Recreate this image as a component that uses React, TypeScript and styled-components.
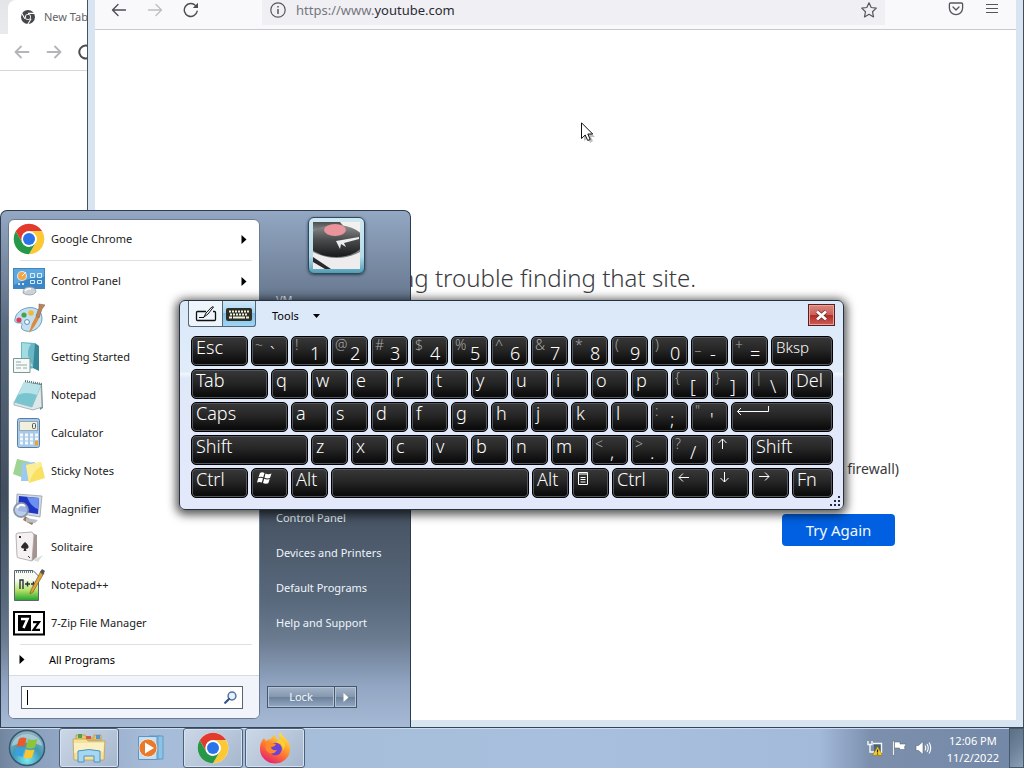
import React from "react";
import styled, { createGlobalStyle } from "styled-components";

const uiFont = `"Noto Sans", "Open Sans", sans-serif`;

const GlobalStyle = createGlobalStyle`
  * { box-sizing: border-box; }
  body { margin: 0; font-family: ${uiFont}; font-size: 11px; line-height: 16px; color: #222; }
  button, input { font: inherit; color: inherit; margin: 0; padding: 0; border: 0; background: none; }
  svg { display: block; flex: none; }
`;

const Desktop = styled.div`
  display: flex;
  flex-direction: column;
  height: 100vh;
  min-height: 728px;
  overflow: hidden;
  background: #fff;
`;

const Workspace = styled.main`
  position: relative;
  flex: 1;
`;

/* ---------- Chrome window ---------- */

const ChromeWindow = styled.section`
  position: absolute;
  inset: 0 auto 0 0;
  width: 60%;
  background: #fff;
`;

const ChromeTabs = styled.div`
  display: flex;
  height: 34px;
  padding-left: 8px;
  background: linear-gradient(#e4e5e9, #e9eaee);
`;

const ChromeTab = styled.div`
  display: flex;
  align-items: center;
  gap: 8px;
  width: 200px;
  padding-left: 12px;
  border-radius: 8px 8px 0 0;
  background: #fff;
  color: #5f6368;
`;

const ChromeToolbar = styled.div`
  display: flex;
  align-items: center;
  gap: 16px;
  height: 37px;
  padding-left: 14px;
  border-bottom: 1px solid #d5d6d8;
`;

const IconButton = styled.button`
  display: grid;
  place-items: center;
`;

/* ---------- Firefox window ---------- */

const FirefoxWindow = styled.section`
  position: absolute;
  inset: 0 0 0 87px;
  display: flex;
  flex-direction: column;
  padding: 0 7px 7px;
  border-left: 1px solid #45525f;
  border-right: 1px solid #3c4e60;
  background: #d8e4ef;
`;

const FirefoxToolbar = styled.div`
  display: flex;
  height: 30px;
  padding: 0 16px;
  border-bottom: 1px solid #c8c9cf;
  background: #f9f9fb;
`;

const NavGroup = styled.div`
  display: flex;
  gap: 20px;
  height: 20px;
  align-items: center;
`;

const AddressBar = styled.form`
  display: flex;
  flex: 1;
  align-items: center;
  gap: 10px;
  height: 25px;
  margin: 0 63px;
  padding: 0 8px 6px 8px;
  background: #f0f0f4;
`;

const Address = styled.p`
  flex: 1;
  margin: 0;
  font-size: 13px;
  line-height: 18px;
  color: #76767c;

  b { font-weight: 400; color: #2b2a33; }
`;

const ErrorPage = styled.div`
  flex: 1;
  display: flex;
  flex-direction: column;
  align-items: flex-end;
  padding: 230px 121px 0 0;
  background: #fff;
  color: #3a3a40;
`;

const ErrorBody = styled.div`
  display: flex;
  flex-direction: column;
  width: 640px;
`;

const ErrorTitle = styled.h1`
  margin: 0 199px 0 0;
  text-align: right;
  white-space: nowrap;
  font-size: 24px;
  line-height: 36px;
  font-weight: 300;
`;

const ErrorHint = styled.p`
  margin: 163px -4px 0 0;
  text-align: right;
  font-size: 14px;
  line-height: 20px;
`;

const TryAgain = styled.button`
  align-self: flex-end;
  width: 113px;
  height: 32px;
  margin-top: 35px;
  border-radius: 4px;
  background: #0060e1;
  color: #f2f8ff;
  font-size: 15px;
`;

/* ---------- Start menu ---------- */

const StartMenuPanel = styled.nav`
  position: absolute;
  left: 0;
  bottom: 0;
  display: flex;
  width: 411px;
  height: 517px;
  padding: 8px 0 8px 7px;
  border: 1px solid #2d3b4c;
  border-bottom: 0;
  border-radius: 7px 7px 0 0;
  background: linear-gradient(#93a7c3, #74869e 12%, #5b6b80 22%, #424e5d 55%, #58687b 75%, #6b7b90 83%, #92a6c3 92%, #a6bad6);
`;

const Programs = styled.div`
  display: flex;
  flex-direction: column;
  width: 252px;
  overflow: hidden;
  border: 1px solid #6c7c90;
  border-radius: 6px;
  background: #fff;
`;

const Rule = styled.hr`
  width: 232px;
  margin: 2px 0 1px 11px;
  border: 0;
  border-top: 1px solid #dde1e6;
`;

const ProgramButton = styled.button`
  display: flex;
  align-items: center;
  gap: 6px;
  width: 100%;
  height: 38px;
  padding: 0 12px 0 4px;
  text-align: left;

  span { flex: 1; }
`;

const AllPrograms = styled(ProgramButton)`
  height: 29px;
  padding: 0 0 2px 10px;
  gap: 24px;
  color: #000;
`;

const SearchArea = styled.div`
  flex: 1;
  padding: 10px 16px 0 12px;
  border-top: 1px solid #d3dbe5;
  background: #f1f5fb;
`;

const SearchBox = styled.label`
  display: flex;
  align-items: center;
  height: 23px;
  padding: 0 5px;
  border: 1px solid #566474;
  background: #fff;

  input { flex: 1; min-width: 0; outline: 0; }
`;

const Caret = styled.i`
  width: 1px;
  height: 15px;
  background: #000;
`;

const Places = styled.div`
  display: flex;
  flex: 1;
  flex-direction: column;
  padding-left: 7px;
`;

const Avatar = styled.div`
  width: 57px;
  height: 57px;
  margin: -2px 0 0 41px;
  padding: 4px;
  border: 1px solid #31485a;
  border-radius: 6px;
  background: linear-gradient(#cfe9f2, #b4dbe8 70%, #4f9db5);
  box-shadow: 0 1px 3px #2b3f52;
`;

const PlaceLink = styled.a`
  padding: 0 9px 19px;
  color: #eef4fb;
  text-decoration: none;
`;

const PlaceList = styled.div`
  display: flex;
  flex-direction: column;
  margin-top: auto;
  padding-bottom: 36px;
`;

const UserLink = styled(PlaceLink)`
  margin-top: 18px;
`;

const LockGroup = styled.div`
  display: flex;
  margin-bottom: 11px;
`;

const LockButton = styled.button<{ $width: number }>`
  display: grid;
  place-items: center;
  width: ${(p) => p.$width}px;
  height: 22px;
  border: 1px solid #46576c;
  box-shadow: inset 0 0 0 1px #b4c4d8;
  background: linear-gradient(#a3b4c9, #8698ae 48%, #6c8098 50%, #93a9c6);
  color: #f2f7fc;

  & + & { border-left: 0; }
`;

/* ---------- On-screen keyboard ---------- */

const KeyboardWindow = styled.section`
  position: absolute;
  left: 179px;
  top: 300px;
  width: 665px;
  height: 210px;
  padding: 0 10px 0 11px;
  border: 1px solid #26323f;
  border-radius: 6px;
  background: linear-gradient(#dae8f8, #e0ecfa 34%, #f1f6fd 35%, #dfe8f9 37%, #e3e9fb);
  box-shadow: 0 2px 10px 3px rgba(0, 0, 0, 0.65);
`;

const KeyboardHeader = styled.header`
  display: flex;
  align-items: flex-start;
  height: 35px;
`;

const ModeButton = styled.button<{ $active?: boolean }>`
  display: grid;
  place-items: center;
  width: 34px;
  height: 26px;
  margin-left: ${(p) => (p.$active ? 0 : -3)}px;
  border: 1px solid #567;
  border-top: 0;
  border-right-width: ${(p) => (p.$active ? 1 : 0)}px;
  border-radius: ${(p) => (p.$active ? "0 0 3px 0" : "0 0 0 3px")};
  background: ${(p) => (p.$active ? "linear-gradient(#cfe8f8, #a6d4f1 48%, #7fbce6 50%, #9ed6f5)" : "#eef5fd")};
`;

const ToolsButton = styled.button`
  display: flex;
  align-items: center;
  gap: 14px;
  height: 30px;
  margin-left: 16px;
  color: #000;
`;

const CloseButton = styled.button`
  display: grid;
  place-items: center;
  width: 27px;
  height: 22px;
  margin: 3px -2px 0 auto;
  border: 1px solid #5c1d1d;
  box-shadow: inset 0 0 0 1px #e5a39c;
  background: linear-gradient(#d98880, #cc6158 48%, #b02a22 50%, #cc5f57);
`;

const Keys = styled.div`
  display: flex;
  flex-direction: column;
  gap: 3px;
`;

const KeyRow = styled.div`
  display: flex;
  gap: 3px;
`;

const Key = styled.button<{ $width: number; $small?: boolean }>`
  display: flex;
  flex: ${(p) => p.$width} 1 ${(p) => p.$width}px;
  min-width: 0;
  height: 30px;
  padding: 0 0 0 4px;
  border: 1px solid #000;
  border-radius: 5px;
  box-shadow: inset 0 0 0 1px #54585e;
  background: linear-gradient(#383838, #262626 45%, #0c0c0c 90%);
  color: #fff;
  font-size: ${(p) => (p.$small ? 15 : 18)}px;
  font-weight: 300;
  line-height: 20px;
  text-align: left;

  svg { margin-top: 2px; }
`;

const Shifted = styled.span`
  width: 13px;
  height: 16px;
  margin-left: -1px;
  color: #a8a8a8;
  font-size: 14px;
  line-height: 16px;
`;

const Plain = styled.span`
  margin: 6px 0 0 2px;
`;

const Grip = styled.svg`
  position: absolute;
  right: 2px;
  bottom: 2px;
`;

const Pointer = styled.svg`
  position: absolute;
  left: 581px;
  top: 122px;
  pointer-events: none;
`;

/* ---------- Taskbar ---------- */

const Taskbar = styled.footer`
  display: flex;
  align-items: stretch;
  height: 41px;
  padding-left: 5px;
  border-top: 1px solid #33475a;
  box-shadow: inset 0 1px 0 #cddcec;
  background: linear-gradient(90deg, #71859f, #8da2be 4%, #a6bcd8 15%, #a8c0dd 55%, #a4badb 80%, #7c90ae 85%, #7388a6);
`;

const StartButton = styled.button`
  display: grid;
  place-items: center;
  width: 44px;
`;

const TaskButton = styled.button<{ $running?: boolean }>`
  display: grid;
  place-items: center;
  width: 60px;
  margin-right: 2px;
  border: 1px solid ${(p) => (p.$running ? "#4d6077" : "transparent")};
  border-radius: 3px;
  box-shadow: ${(p) => (p.$running ? "inset 0 0 0 1px #d6e2f0" : "none")};
  background: ${(p) => (p.$running ? "linear-gradient(135deg, #ccd8e7, #a5b6cd)" : "none")};
`;

const TaskList = styled.div`
  display: flex;
  margin-left: 10px;
`;

const Tray = styled.div`
  display: flex;
  align-items: center;
  gap: 8px;
  margin-left: auto;
`;

const Clock = styled.time`
  margin: 2px 2px 0 7px;
  text-align: center;
  line-height: 17px;
  color: #fff;
`;

const ShowDesktop = styled.button`
  width: 15px;
  height: 100%;
  border: 1px solid #46586c;
  background: linear-gradient(135deg, #5c7084, #6e8399 50%, #8ca0b8);
`;

/* ---------- Icons ---------- */

const ChromeLogo = ({ size = 32 }: { size?: number }) => (
  <svg width={size} height={size} viewBox="0 0 48 48">
    <circle cx="24" cy="24" r="23" fill="#fff" />
    <path d="M4.1 12.5A23 23 0 0 1 43.9 12.5H24A11.5 11.5 0 0 0 14 18.3L14 29.7Z" fill="#e23b2e" />
    <path d="M43.9 12.5A23 23 0 0 1 24 47L34 29.7A11.5 11.5 0 0 0 34 18.2L24 12.5Z" fill="#fcc934" />
    <path d="M4.1 12.5L14 29.7A11.5 11.5 0 0 0 24 35.5L34 29.7L24 47A23 23 0 0 1 4.1 12.5Z" fill="#279847" />
    <circle cx="24" cy="24" r="11.5" fill="#fff" />
    <circle cx="24" cy="24" r="9" fill="#2b73e8" />
  </svg>
);

const ChromeMono = () => (
  <svg width="16" height="16" viewBox="0 0 16 16" fill="none">
    <circle cx="8" cy="8" r="5" stroke="#46484b" strokeWidth="4" />
    <circle cx="8" cy="8" r="2.2" fill="#46484b" />
    <path d="M8 4.4H15M4.9 9.8L1.6 3.9M11.1 9.8L7.6 15.5" stroke="#fff" strokeWidth="1.1" />
  </svg>
);

const Arrow = ({ flip, color, width = 1.3 }: { flip?: boolean; color: string; width?: number }) => (
  <svg width="16" height="16" viewBox="0 0 16 16" fill="none" stroke={color} strokeWidth={width} strokeLinecap="round" strokeLinejoin="round">
    <path d={flip ? "M1.5 8H14.5M9 2.5L14.5 8L9 13.5" : "M14.5 8H1.5M7 2.5L1.5 8L7 13.5"} />
  </svg>
);

const Reload = ({ width = 1.4 }: { width?: number }) => (
  <svg width="16" height="16" viewBox="0 0 16 16" fill="none">
    <path d="M14.2 9.2A6.5 6.5 0 1 1 12.6 3.6" stroke="#4b4b52" strokeWidth={width} strokeLinecap="round" />
    <path d="M15 .8V6H9.8Z" fill="#4b4b52" />
  </svg>
);

const RightTriangle = ({ color = "#000" }: { color?: string }) => (
  <svg width="6" height="9" viewBox="0 0 6 9"><path d="M.5 0L5.5 4.5L.5 9Z" fill={color} /></svg>
);

const ControlPanelIcon = () => (
  <svg width="32" height="32" viewBox="0 0 32 32">
    <path d="M0 3H32V24H0Z" fill="#3b86c4" />
    <path d="M1 4H31V12Q16 12 1 20Z" fill="#5fa6dc" />
    <circle cx="9" cy="11" r="4.5" fill="#f4a645" stroke="#cfe4f2" strokeWidth="1.2" />
    <path d="M9 11L13 7" stroke="#fff" />
    <path d="M17.500 8.500H21.500V12.500H17.500ZM24.500 8.500H28.500V12.500H24.500ZM17.500 15.500H21.500V18.500H17.500ZM24.500 15.500H28.500V18.500H24.500Z" fill="none" stroke="#d7eefc" />
    <path d="M5 19H7M9 19H11" stroke="#cfe6f6" strokeWidth="2" />
    <path d="M10 28Q10 22 16 22Q23 22 23 27Q21 30 17 30Q12 30 10 28Z" fill="#cdd2d6" stroke="#8b949c" strokeWidth=".7" />
    <path d="M12 26Q14 23 18 24" stroke="#fff" fill="none" strokeWidth="1.5" />
  </svg>
);

const PaintIcon = () => (
  <svg width="32" height="32" viewBox="0 0 32 32">
    <path d="M2 16C3 8 13 3 21 5C29 7 31 16 27 22C23 29 13 30 9 26C7 23 11 21 8 20C4 20 1 20 2 16Z" fill="#c4dfef" stroke="#6f9fbd" />
    <circle cx="6" cy="17" r="2.6" fill="#d8405c" />
    <circle cx="11" cy="12" r="2.6" fill="#46a34c" />
    <circle cx="18" cy="10" r="2.8" fill="#f0b93c" />
    <circle cx="14" cy="19" r="2.4" fill="#fff" stroke="#4a8ec2" />
    <path d="M16 30Q18 21 23 13L26 15Q22 24 16 30Z" fill="#dd8b3a" />
    <path d="M23 13L26 5L26 1L32 2L29 6L26 15Z" fill="#b9855d" stroke="#8b6140" strokeWidth=".6" />
  </svg>
);

const GettingStartedIcon = () => (
  <svg width="32" height="32" viewBox="0 0 32 32">
    <path d="M8 1L22 2V27L8 29Z" fill="#69b6c6" />
    <path d="M22 2L26 5V30L20 27Z" fill="#378797" />
    <path d="M9 2L18 3Q11 13 20 25L9 26Z" fill="#a3dbe3" />
    <path d="M.5 17.500H17V31.500H.5Z" fill="#f6f9f7" stroke="#7a9992" />
    <path d="M3 21H8M3 24H14M3 27H8M10 27H14" stroke="#8caaa7" />
  </svg>
);

const NotepadIcon = () => (
  <svg width="32" height="32" viewBox="0 0 32 32">
    <path d="M12 3L29 5L30 29L27 31L24 8Z" fill="#7c8b90" />
    <path d="M1 23L19 28L28 6L29 28L20 31L1 26Z" fill="#dce8e9" stroke="#8ba1a6" strokeWidth=".7" />
    <path d="M11 3L28 6L19 28L1 23Z" fill="#78c4cf" />
    <path d="M11 3L28 6L24 16Q12 12 5 16Z" fill="#b7e3e8" />
    <path d="M12 2L29 5" stroke="#596e78" strokeDasharray="1 1" strokeWidth="2" />
  </svg>
);

const CalculatorIcon = () => (
  <svg width="32" height="32" viewBox="0 0 32 32">
    <rect x="4.500" y="1.500" width="22" height="29" rx="2" fill="#a9c9e6" stroke="#557fa8" />
    <rect x="6.500" y="4.500" width="18" height="9" fill="#f1f0dd" stroke="#93a9b9" />
    <rect x="19.500" y="6.500" width="3" height="5" rx="1" fill="none" stroke="#4a5560" />
    <path d="M7 18H20M7 22H20M7 26H20" stroke="#f2f8fd" strokeWidth="3" strokeDasharray="3 2" />
    <path d="M22 18H25M22 22H25" stroke="#f2f8fd" strokeWidth="3" />
    <path d="M22 26H25" stroke="#eaa23d" strokeWidth="5" />
  </svg>
);

const StickyNotesIcon = () => (
  <svg width="32" height="32" viewBox="0 0 32 32">
    <path d="M4 4L17 7L13 24L0 19Z" fill="#9fd494" />
    <path d="M9 8L22 7L22 26L8 26Z" fill="#9cc9ee" />
    <path d="M13 10L28 7L32 23L16 28Z" fill="#f8e163" />
    <path d="M13 10L28 7L29 11Q20 15 16 28Z" fill="#fbee97" />
  </svg>
);

const MagnifierIcon = () => (
  <svg width="32" height="32" viewBox="0 0 32 32">
    <path d="M4 1L29 3L27 24L3 20Z" fill="#d2d8e2" stroke="#8c97a8" strokeWidth=".7" />
    <path d="M6 3L26 5L25 21L5 18Z" fill="#1f36c4" />
    <path d="M14 4L26 5L25 16Q18 14 14 4Z" fill="#6c90f0" />
    <path d="M12 23L21 29L19 32L10 27Z" fill="#9c7a5b" />
    <path d="M13 25L25 27L22 30L13 29Z" fill="#b9bfc8" />
    <circle cx="8" cy="17" r="7" fill="#b8cdea" fillOpacity=".85" stroke="#8797ab" strokeWidth="1.800" />
    <path d="M4 15Q7 10 12 13" stroke="#fff" fill="none" strokeWidth="2" />
  </svg>
);

const SolitaireIcon = () => (
  <svg width="32" height="32" viewBox="0 0 32 32">
    <path d="M20 29L30 24L25 31Z" fill="#d9dfda" />
    <path d="M19 2L24 4V26L19 30Z" fill="#a5948f" />
    <path d="M3 4Q3 2 5 2L19 1L21 4L19 30L6 27Q4 27 4 25Z" fill="#f4f1f0" stroke="#a7a3a2" strokeWidth=".8" />
    <path d="M12 11Q16 14 15.500 16.500Q14.500 18.500 12.800 17.500L13.500 20H10.500L11.200 17.500Q8 18 8 15.800Q9 13.500 12 11Z" fill="#2b2b2d" />
    <path d="M6 5L8 7M8 5L6 7M15 25L17 27" stroke="#333" />
  </svg>
);

const NotepadPlusIcon = () => (
  <svg width="32" height="32" viewBox="0 0 32 32">
    <defs>
      <linearGradient id="npp" x2="0" y2="1">
        <stop offset=".3" stopColor="#f8fbf3" />
        <stop offset=".65" stopColor="#b8e36a" />
        <stop offset="1" stopColor="#21a32b" />
      </linearGradient>
    </defs>
    <path d="M1.500 1.500H20L25.500 7V31.500H1.500Z" fill="url(#npp)" stroke="#5b6670" />
    <path d="M3 3H20" stroke="#6a7a86" strokeWidth="2" strokeDasharray="1 1" />
    <path d="M7 20V11H10V20M12 15H17M14.500 12.500V17.500M18 15H23M20.500 12.500V17.500" fill="none" stroke="#28313a" strokeWidth="1.400" />
    <path d="M28 2L31 4L20 23L17 25L18 21Z" fill="#e2a33a" stroke="#7c5b2e" strokeWidth=".7" />
    <path d="M27 3L29 0L32 2L30 6Z" fill="#50555b" />
  </svg>
);

const SevenZipIcon = () => (
  <svg width="32" height="32" viewBox="0 0 32 32">
    <path d="M1 5H31V27.500H1Z" fill="#fff" stroke="#000" strokeWidth="2" />
    <path d="M5 8H18V24H5Z" fill="#000" />
    <path d="M8 12H14.500L10.500 21" stroke="#fff" strokeWidth="2.600" fill="none" />
    <path d="M20 15.200H26L20.500 22.800H27" stroke="#000" strokeWidth="2.200" fill="none" />
  </svg>
);

const SearchIcon = () => (
  <svg width="13" height="13" viewBox="0 0 13 13" fill="none">
    <circle cx="8" cy="5" r="3.900" fill="#e6f1fb" stroke="#54749e" strokeWidth="1.500" />
    <path d="M5 8L1.200 11.800" stroke="#31548a" strokeWidth="2.200" strokeLinecap="round" />
  </svg>
);

const AvatarPicture = () => (
  <svg width="47" height="47" viewBox="0 0 47 47">
    <defs>
      <linearGradient id="room" x2="0" y2="1">
        <stop offset="0" stopColor="#4c4f51" />
        <stop offset=".3" stopColor="#a9aaa9" />
        <stop offset=".7" stopColor="#77797a" />
        <stop offset="1" stopColor="#8c8d8f" />
      </linearGradient>
      <linearGradient id="record" x2="0" y2="1">
        <stop offset="0" stopColor="#8d8f90" />
        <stop offset=".45" stopColor="#4b4d4f" />
        <stop offset="1" stopColor="#18191b" />
      </linearGradient>
    </defs>
    <path d="M0 0H47V47H0Z" fill="url(#room)" />
    <path d="M27 0H47V15Q36 12 27 0Z" fill="#f2f1f0" />
    <ellipse cx="23" cy="19" rx="28" ry="16" fill="url(#record)" />
    <ellipse cx="22" cy="8" rx="11" ry="6" fill="#e9959b" />
    <path d="M23 19L46 15V17L31 21L33 25L28 22L27 27L25 23Z" fill="#eee" />
    <path d="M0 30Q24 42 47 30V47H0Z" fill="#efeced" />
    <path d="M0 35L18 47H12L0 40Z" fill="#29292b" />
  </svg>
);

const PenIcon = () => (
  <svg width="22" height="16" viewBox="0 0 22 16" fill="none" stroke="#111">
    <path d="M11 5.500H2.500Q1.500 5.500 1.500 6.500V13.500Q1.500 14.500 2.500 14.500H19.500Q20.500 14.500 20.500 13.500V6.500Q20.500 5.500 19.500 5.500H18" strokeWidth="1.300" />
    <path d="M18.500 1L13 8L9 11L11 7L17 .8Z" fill="#fff" />
    <path d="M4 11.500H9" />
  </svg>
);

const KeyboardIcon = () => (
  <svg width="26" height="14" viewBox="0 0 26 14">
    <rect width="26" height="13" y="1" rx="2" fill="#2d2f25" />
    <path d="M3 4.500H23M4 7.500H22" stroke="#f0efe2" strokeWidth="2" strokeDasharray="2 1" />
    <path d="M3 10.500H6M7 10.500H19M20 10.500H23" stroke="#f0efe2" strokeWidth="2" />
  </svg>
);

const KeyArrow = ({ turn }: { turn: number }) => (
  <svg width="14" height="12" viewBox="-7 -6 14 12" fill="none" stroke="#fff" strokeWidth="1">
    <path d="M5 .5H-5M-1 -3.500L-5 .5L-1 4.500" transform={`rotate(${turn})`} />
  </svg>
);

const EnterArrow = () => (
  <svg width="34" height="12" viewBox="0 0 34 12" fill="none" stroke="#fff">
    <path d="M32.500 1V6.500H1.500M5 3L1.500 6.500L5 10" />
  </svg>
);

const WindowsGlyph = () => (
  <svg width="18" height="14" viewBox="0 0 18 14" fill="#fff">
    <path d="M4 2Q6 .5 8.500 2L7.300 6.300Q5 5 2.500 6.300ZM9.500 2.500Q12 4 15.500 2.500L14 7Q11 8 8.500 6.700ZM2.200 7.300Q5 6 7 7.300L5.800 11.500Q3 10.300 1 11.500ZM8.200 7.800Q11 9 13.700 8L12.300 12.300Q9.500 13.300 7 12Z" />
  </svg>
);

const MenuGlyph = () => (
  <svg width="14" height="16" viewBox="0 0 14 16" fill="none" stroke="#fff">
    <path d="M1.500 1.500H10.500V13.500H1.500ZM1.500 3H10.500M3.500 6.500H8.500M3.500 8.500H8.500M3.500 11H8.500" />
  </svg>
);

const StartOrb = () => (
  <svg width="38" height="38" viewBox="0 0 38 38">
    <defs>
      <radialGradient id="orb" cx=".5" cy=".85" r=".8">
        <stop offset="0" stopColor="#7be8f0" />
        <stop offset=".5" stopColor="#3f98b4" />
        <stop offset="1" stopColor="#8fb0bd" />
      </radialGradient>
    </defs>
    <circle cx="19" cy="19" r="17.500" fill="url(#orb)" stroke="#345a73" strokeWidth="1.500" />
    <path d="M3.500 17A16 16 0 0 1 34.500 17Q19 10 3.500 17Z" fill="#d6e8ee" fillOpacity=".5" />
    <path d="M11 10Q14.500 7.500 18.500 9.500L16.500 18Q13 16 8.500 18Z" fill="#e8592b" />
    <path d="M20 10Q24 12 29.500 10L27 18.500Q22.500 20.500 18 18.500Z" fill="#8cc43d" />
    <path d="M8 19.500Q12.500 17.500 16.500 19.500L14.500 28Q11 26 5.800 27.500Z" fill="#3aa0dc" />
    <path d="M17.700 20.300Q22 22 26.500 20.500L24 28.500Q20 30.500 15.700 28.500Z" fill="#fbc62f" />
  </svg>
);

const ExplorerIcon = () => (
  <svg width="34" height="32" viewBox="0 0 34 32">
    <path d="M4 3H13L15 6H22V3H29V8H4Z" fill="#e8c66a" stroke="#b9913f" strokeWidth=".7" />
    <path d="M6 2H10V6H6Z" fill="#4ba34d" /><path d="M14 4H19V7H14Z" fill="#d9574a" /><path d="M24 3H28V7H24Z" fill="#4d98d6" />
    <path d="M1 7H14L16 9H33L32 28H2Z" fill="#f6e19a" stroke="#c2a052" strokeWidth=".8" />
    <path d="M2 11H32L31 20Q18 15 2 21Z" fill="#fbf0c1" />
    <path d="M6 19Q17 16 28 19V30H22V24H12V30H6Z" fill="#a6d7f2" stroke="#4b93c2" />
  </svg>
);

const MediaPlayerIcon = () => (
  <svg width="30" height="28" viewBox="0 0 30 28">
    <path d="M13 2H24V25H13Z" fill="#a9d6f0" stroke="#5f9cc7" />
    <path d="M22 2H27V25H22Z" fill="#8ec3e6" stroke="#5f9cc7" />
    <path d="M2.500 2.500H21V25.500H2.500Z" fill="#c5dff1" stroke="#5c96c3" />
    <circle cx="12" cy="14" r="9" fill="#e9792b" stroke="#fff" strokeOpacity=".6" />
    <path d="M9 8.500L18 14L9 19.500Z" fill="#fff" />
  </svg>
);

const FirefoxLogo = () => (
  <svg width="32" height="32" viewBox="0 0 32 32">
    <defs>
      <linearGradient id="fox" x1=".85" y1="0" x2=".3" y2="1">
        <stop offset="0" stopColor="#fff04a" />
        <stop offset=".35" stopColor="#ffb02e" />
        <stop offset=".65" stopColor="#ff6a36" />
        <stop offset="1" stopColor="#e31f74" />
      </linearGradient>
    </defs>
    <path d="M5 6L7 9Q9 7 12 7Q13 4 16 3L17 7L21 8Q19 4 21 0Q24 5 27 7Q31 11 31 17A15 14.500 0 0 1 1 17Q1 10 5 6Z" fill="url(#fox)" />
    <circle cx="16.500" cy="17" r="6.300" fill="#6b43d6" />
    <path d="M7 11Q10 9 13 11L17 12Q16 15 12 15Q13 19 18 18Q15 23 10 21Q5 18 7 11Z" fill="#ff8a2b" />
    <path d="M17 10Q24 11 24 18Q29 12 22 7Z" fill="#ffcf37" />
  </svg>
);

const NetworkIcon = () => (
  <svg width="16" height="16" viewBox="0 0 16 16" fill="none">
    <path d="M7 4H14V12H7Z" fill="#4d6078" />
    <path d="M1 1V4.500H5V1M3 4.500V12H7M6 3.500H14.500V12.500H8" stroke="#f6f9fc" strokeWidth="1.400" />
    <path d="M10.500 6.500L15.500 15.300H5.500Z" fill="#f7cf2d" stroke="#8c741a" strokeWidth=".6" />
    <path d="M10.500 9.500V12.500M10.500 13.400V14.500" stroke="#222" strokeWidth="1.200" />
  </svg>
);

const FlagIcon = () => (
  <svg width="16" height="16" viewBox="0 0 16 16" fill="#fff" stroke="#4c5c70" strokeWidth=".5">
    <path d="M1.500 1H3.300V15.500H1.500Z" />
    <path d="M3.500 2H9V4H15L13.500 7L14 9.500H8.500V8H3.500Z" />
  </svg>
);

const SpeakerIcon = () => (
  <svg width="17" height="16" viewBox="0 0 17 16" fill="none" stroke="#fff">
    <path d="M1 5.500H3.500L8 1.500V14.500L3.500 10.500H1Z" fill="#fff" stroke="#56677c" strokeWidth=".6" />
    <path d="M10 5.500Q11.500 8 10 10.500M12 4Q14.500 8 12 12M14 2.500Q17.500 8 14 13.500" strokeWidth="1.100" />
  </svg>
);

/* ---------- Content ---------- */

const programs: { name: string; Icon: React.FC; submenu?: boolean }[] = [
  { name: "Control Panel", Icon: ControlPanelIcon, submenu: true },
  { name: "Paint", Icon: PaintIcon },
  { name: "Getting Started", Icon: GettingStartedIcon },
  { name: "Notepad", Icon: NotepadIcon },
  { name: "Calculator", Icon: CalculatorIcon },
  { name: "Sticky Notes", Icon: StickyNotesIcon },
  { name: "Magnifier", Icon: MagnifierIcon },
  { name: "Solitaire", Icon: SolitaireIcon },
  { name: "Notepad++", Icon: NotepadPlusIcon },
  { name: "7-Zip File Manager", Icon: SevenZipIcon },
];

const places = ["Control Panel", "Devices and Printers", "Default Programs", "Help and Support"];

type KeyDef = { label?: string; shift?: string; glyph?: React.ReactNode; name?: string; width?: number; small?: boolean };

const letters = (text: string): KeyDef[] => text.split("").map((label) => ({ label }));
const pairs = (text: string): KeyDef[] => text.split(" ").map((pair) => ({ shift: pair[0], label: pair[1] }));

const keyRows: KeyDef[][] = [
  [{ label: "Esc", width: 57 }, ...pairs("~` !1 @2 #3 $4 %5 ^6 &7 *8 (9 )0 _- +="), { label: "Bksp", width: 62, small: true }],
  [{ label: "Tab", width: 77 }, ...letters("qwertyuiop"), ...pairs("{[ }] |\\"), { label: "Del", width: 42 }],
  [{ label: "Caps", width: 97 }, ...letters("asdfghjkl"), ...pairs(":; \"'"), { name: "Enter", glyph: <EnterArrow />, width: 102 }],
  [{ label: "Shift", width: 117 }, ...letters("zxcvbnm"), ...pairs("<, >. ?/"), { name: "Up", glyph: <KeyArrow turn={90} /> }, { label: "Shift", width: 82 }],
  [
    { label: "Ctrl", width: 57 },
    { name: "Windows", glyph: <WindowsGlyph /> },
    { label: "Alt" },
    { name: "Space", width: 198 },
    { label: "Alt" },
    { name: "Menu", glyph: <MenuGlyph /> },
    { label: "Ctrl", width: 57 },
    { name: "Left", glyph: <KeyArrow turn={0} /> },
    { name: "Down", glyph: <KeyArrow turn={-90} /> },
    { name: "Right", glyph: <KeyArrow turn={180} /> },
    { label: "Fn", width: 41 },
  ],
];

const ChromeBrowser = () => (
  <ChromeWindow>
    <ChromeTabs>
      <ChromeTab><ChromeMono />New Tab</ChromeTab>
    </ChromeTabs>
    <ChromeToolbar>
      <IconButton aria-label="Back"><Arrow color="#b4b5b8" width={1.8} /></IconButton>
      <IconButton aria-label="Forward"><Arrow color="#b4b5b8" width={1.8} flip /></IconButton>
      <IconButton aria-label="Reload"><Reload width={2} /></IconButton>
    </ChromeToolbar>
  </ChromeWindow>
);

const FirefoxBrowser = () => (
  <FirefoxWindow>
    <FirefoxToolbar>
      <NavGroup>
        <IconButton aria-label="Back"><Arrow color="#4b4b52" /></IconButton>
        <IconButton aria-label="Forward"><Arrow color="#bdbdc2" flip /></IconButton>
        <IconButton aria-label="Reload"><Reload /></IconButton>
      </NavGroup>
      <AddressBar>
        <svg width="16" height="16" viewBox="0 0 16 16" fill="none" stroke="#55555c" strokeWidth="1.200">
          <circle cx="8" cy="8" r="7.200" />
          <path d="M8 7V12M8 4V5.500" strokeWidth="1.500" />
        </svg>
        <Address>https://www.<b>youtube.com</b></Address>
        <svg width="16" height="16" viewBox="0 0 16 16" fill="none" stroke="#55555c" strokeWidth="1.200" strokeLinejoin="round">
          <path d="M8 .8L10.200 5.500L15.300 6.100L11.500 9.700L12.500 14.900L8 12.300L3.500 14.900L4.500 9.700L.7 6.100L5.800 5.500Z" />
        </svg>
      </AddressBar>
      <NavGroup>
        <IconButton aria-label="Save to Pocket">
          <svg width="16" height="16" viewBox="0 0 16 16" fill="none" stroke="#55555c" strokeWidth="1.300" strokeLinecap="round" strokeLinejoin="round">
            <path d="M2.500 1H13.500Q14.600 1 14.600 2V6A6.600 6.600 0 0 1 1.400 6V2Q1.400 1 2.500 1ZM5 5L8 8L11 5" />
          </svg>
        </IconButton>
        <IconButton aria-label="Menu">
          <svg width="16" height="16" viewBox="0 0 16 16" stroke="#55555c" strokeWidth="1.200"><path d="M2 2.500H14M2 6.500H14M2 10.500H14" /></svg>
        </IconButton>
      </NavGroup>
    </FirefoxToolbar>
    <ErrorPage>
      <ErrorBody>
        <ErrorTitle>We’re having trouble finding that site.</ErrorTitle>
        <ErrorHint>firewall)</ErrorHint>
        <TryAgain>Try Again</TryAgain>
      </ErrorBody>
    </ErrorPage>
  </FirefoxWindow>
);

const StartMenu = () => (
  <StartMenuPanel aria-label="Start menu">
    <Programs>
      <ProgramButton><ChromeLogo /><span>Google Chrome</span><RightTriangle /></ProgramButton>
      <Rule />
      {programs.map(({ name, Icon, submenu }) => (
        <ProgramButton key={name}><Icon /><span>{name}</span>{submenu && <RightTriangle />}</ProgramButton>
      ))}
      <Rule />
      <AllPrograms><RightTriangle /><span>All Programs</span></AllPrograms>
      <SearchArea>
        <SearchBox>
          <Caret />
          <input type="text" aria-label="Search programs and files" />
          <SearchIcon />
        </SearchBox>
      </SearchArea>
    </Programs>
    <Places>
      <Avatar><AvatarPicture /></Avatar>
      <UserLink href="#user">VM</UserLink>
      <PlaceList>
        {places.map((place) => <PlaceLink key={place} href="#place">{place}</PlaceLink>)}
      </PlaceList>
      <LockGroup>
        <LockButton $width={68}>Lock</LockButton>
        <LockButton $width={22} aria-label="More options"><RightTriangle color="#fff" /></LockButton>
      </LockGroup>
    </Places>
  </StartMenuPanel>
);

const OnScreenKeyboard = () => (
  <KeyboardWindow>
    <KeyboardHeader>
      <ModeButton aria-label="Writing pad"><PenIcon /></ModeButton>
      <ModeButton $active aria-label="Touch keyboard"><KeyboardIcon /></ModeButton>
      <ToolsButton>
        Tools
        <svg width="7" height="4" viewBox="0 0 7 4"><path d="M0 0H7L3.500 4Z" /></svg>
      </ToolsButton>
      <CloseButton aria-label="Close">
        <svg width="13" height="11" viewBox="0 0 13 11" fill="none">
          <path d="M2 1.500L11 9.500M11 1.500L2 9.500" stroke="#6b2b2b" strokeWidth="4.200" />
          <path d="M2 1.500L11 9.500M11 1.500L2 9.500" stroke="#fff" strokeWidth="2.800" />
        </svg>
      </CloseButton>
    </KeyboardHeader>
    <Keys>
      {keyRows.map((row, r) => (
        <KeyRow key={r}>
          {row.map((k, i) => (
            <Key key={i} $width={k.width ?? 37} $small={k.small} aria-label={k.name}>
              {k.shift && <Shifted>{k.shift}</Shifted>}
              {k.shift ? <Plain>{k.label}</Plain> : k.label}
              {k.glyph}
            </Key>
          ))}
        </KeyRow>
      ))}
    </Keys>
    <Grip width="11" height="11" viewBox="0 0 11 11" fill="#222c3c">
      <path d="M8 0H10V2H8ZM4 4H6V6H4ZM8 4H10V6H8ZM0 8H2V10H0ZM4 8H6V10H4ZM8 8H10V10H8Z" />
    </Grip>
  </KeyboardWindow>
);

const SystemTaskbar = () => (
  <Taskbar>
    <StartButton aria-label="Start"><StartOrb /></StartButton>
    <TaskList>
      <TaskButton $running aria-label="Windows Explorer"><ExplorerIcon /></TaskButton>
      <TaskButton aria-label="Media Player"><MediaPlayerIcon /></TaskButton>
      <TaskButton $running aria-label="Google Chrome"><ChromeLogo /></TaskButton>
      <TaskButton $running aria-label="Firefox"><FirefoxLogo /></TaskButton>
    </TaskList>
    <Tray>
      <NetworkIcon />
      <FlagIcon />
      <SpeakerIcon />
      <Clock>12:06 PM<br />11/2/2022</Clock>
      <ShowDesktop aria-label="Show desktop" />
    </Tray>
  </Taskbar>
);

export default function App() {
  return (
    <Desktop>
      <GlobalStyle />
      <Workspace>
        <ChromeBrowser />
        <FirefoxBrowser />
        <StartMenu />
        <OnScreenKeyboard />
        <Pointer width="16" height="21" viewBox="0 0 16 21">
          <path d="M3 3V19L7 16L9 21L12 19L10 15H14Z" fill="#000" fillOpacity=".25" />
          <path d="M.5 .8V16.500L4.200 13L6.700 18.500L9.200 17.400L6.800 12H11.700Z" fill="#fff" stroke="#111" />
        </Pointer>
      </Workspace>
      <SystemTaskbar />
    </Desktop>
  );
}
